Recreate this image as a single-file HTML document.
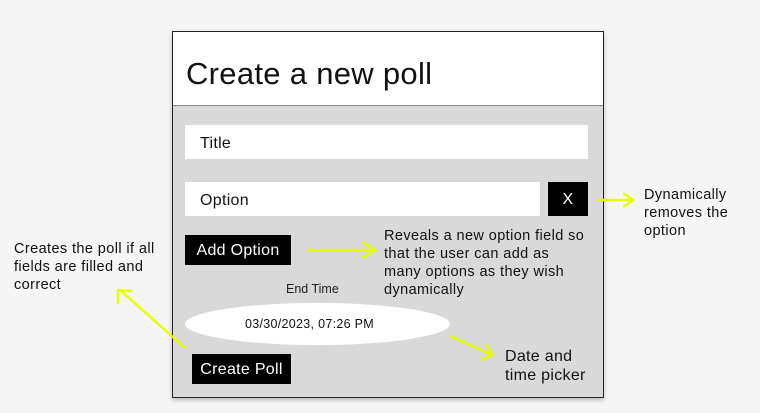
<!DOCTYPE html>
<html><head><style>
body{margin:0;width:760px;height:413px;background:#f5f5f5;font-family:"Liberation Sans",sans-serif;position:relative;overflow:hidden}
.a{position:absolute}
.card{left:172px;top:31px;width:430px;height:365px;border:1px solid #222;background:#d9d9d9;box-shadow:0 2px 4px rgba(0,0,0,.25)}
.hd{left:0;top:0;width:430px;height:73px;background:#fff;border-bottom:1px solid #888}
.in{background:#fff;font-size:16px;color:#111;box-sizing:border-box;padding-left:15px;padding-top:3px;display:flex;align-items:center;letter-spacing:.3px}
.btn{background:#000;color:#fff;font-size:16px;display:flex;align-items:center;justify-content:center;letter-spacing:.3px;padding-top:2px;box-sizing:border-box}
.t{font-size:14.5px;color:#111;line-height:18px;letter-spacing:.4px}
</style></head><body>
<div class="a card">
 <div class="a hd"><div class="a" style="left:13px;top:24px;font-size:31px;color:#111;letter-spacing:.3px">Create a new poll</div></div>
</div>
<div class="a in" style="left:185px;top:125px;width:403px;height:34px">Title</div>
<div class="a in" style="left:185px;top:182px;width:355px;height:34px">Option</div>
<div class="a btn" style="left:548px;top:182px;width:40px;height:34px">X</div>
<div class="a btn" style="left:185px;top:235px;width:106px;height:30px">Add Option</div>
<div class="a" style="left:286px;top:282px;font-size:12.5px;color:#222">End Time</div>
<div class="a" style="left:185px;top:303px;width:265px;height:42px;border-radius:50%;background:#fff"></div>
<div class="a" style="left:245px;top:317px;font-size:12.5px;color:#111;letter-spacing:.3px">03/30/2023, 07:26 PM</div>
<div class="a btn" style="left:192px;top:354px;width:99px;height:30px">Create Poll</div>
<div class="a t" style="left:384px;top:227px">Reveals a new option field so<br>that the user can add as<br>many options as they wish<br>dynamically</div>
<div class="a t" style="left:644px;top:186px">Dynamically<br>removes the<br>option</div>
<div class="a t" style="left:14px;top:240px">Creates the poll if all<br>fields are filled and<br>correct</div>
<div class="a" style="left:505px;top:347px;font-size:16px;color:#111;line-height:19px;letter-spacing:.3px">Date and<br>time picker</div>
<svg class="a" style="left:0;top:0" width="760" height="413" fill="none" stroke="#e8ff00" stroke-width="2.5">
<path d="M307 250H375M362 242L375 250L362 258"/>
<path d="M597 200H632M623 193L633 200L623 207"/>
<path d="M185 348L120 290M118 304L118 290L132 291"/>
<path d="M450 336L492 355M480 360L492 355L486 344"/>
</svg>
</body></html>
